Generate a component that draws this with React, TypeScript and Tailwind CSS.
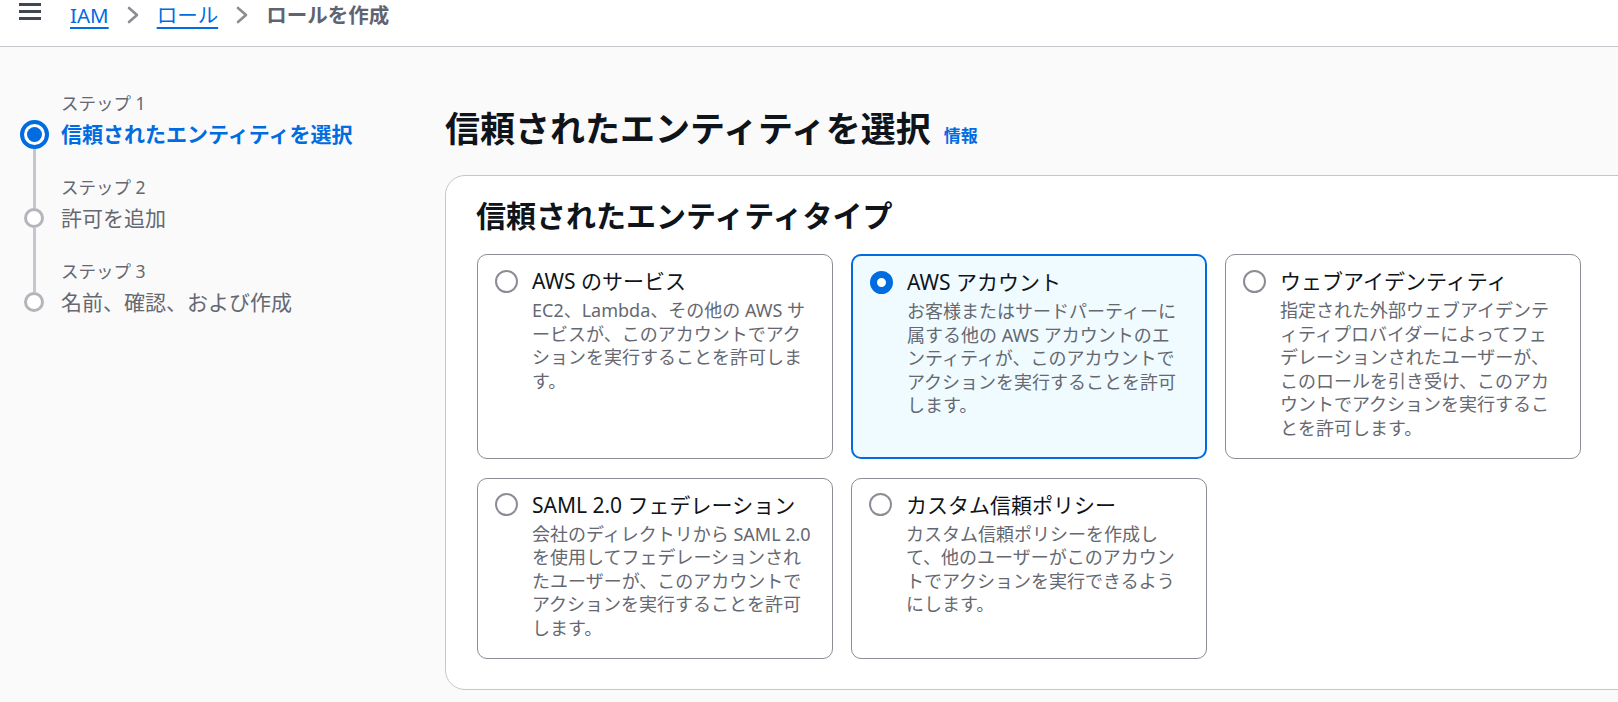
import React from 'react';

type EntityOption = {
  id: string;
  title: string;
  description: string;
};

const options: EntityOption[] = [
  {
    id: 'service',
    title: 'AWS のサービス',
    description: 'EC2、Lambda、その他の AWS サービスが、このアカウントでアクションを実行することを許可します。',
  },
  {
    id: 'account',
    title: 'AWS アカウント',
    description: 'お客様またはサードパーティーに属する他の AWS アカウントのエンティティが、このアカウントでアクションを実行することを許可します。',
  },
  {
    id: 'web',
    title: 'ウェブアイデンティティ',
    description: '指定された外部ウェブアイデンティティプロバイダーによってフェデレーションされたユーザーが、このロールを引き受け、このアカウントでアクションを実行することを許可します。',
  },
  {
    id: 'saml',
    title: 'SAML 2.0 フェデレーション',
    description: '会社のディレクトリから SAML 2.0 を使用してフェデレーションされたユーザーが、このアカウントでアクションを実行することを許可します。',
  },
  {
    id: 'custom',
    title: 'カスタム信頼ポリシー',
    description: 'カスタム信頼ポリシーを作成して、他のユーザーがこのアカウントでアクションを実行できるようにします。',
  },
];

const steps = [
  { label: 'ステップ 1', title: '信頼されたエンティティを選択' },
  { label: 'ステップ 2', title: '許可を追加' },
  { label: 'ステップ 3', title: '名前、確認、および作成' },
];

function Chevron() {
  return (
    <svg width="12" height="18" viewBox="0 0 12 18" fill="none" className="shrink-0">
      <polyline points="2,2 10,9 2,16" stroke="#8c8c94" strokeWidth="2.6" strokeLinecap="round" strokeLinejoin="round" />
    </svg>
  );
}

export default function App() {
  const selectedId = 'account';

  return (
    <div
      lang="ja"
      className="w-full h-[702px] overflow-hidden bg-[#fafafa] text-[#0f141a]"
      style={{ fontFamily: '"Noto Sans", "Noto Sans CJK JP", sans-serif' }}
    >
      {/* Top bar */}
      <div className="h-[47px] bg-white border-b border-[#c6c6cd] flex items-start pl-[19px]">
        <svg width="22" height="20" viewBox="0 0 22 20" className="mt-[2px] shrink-0">
          <rect x="0" y="1" width="22" height="3" fill="#414750" />
          <rect x="0" y="8" width="22" height="3" fill="#414750" />
          <rect x="0" y="15" width="22" height="3" fill="#414750" />
        </svg>
        <nav className="ml-[29px] h-[30px] flex items-center gap-[18px] text-[20.5px] leading-[30px]">
          <span className="text-[#006ce0] underline decoration-2 underline-offset-[4px]">IAM</span>
          <Chevron />
          <span className="text-[#006ce0] underline decoration-2 underline-offset-[4px]">ロール</span>
          <Chevron />
          <span className="text-[#5f6470] font-bold">ロールを作成</span>
        </nav>
      </div>

      <div className="flex">
        {/* Wizard steps */}
        <aside className="w-[445px] shrink-0 pt-[46px] pl-[19px]">
          {steps.map((step, i) => {
            const active = i === 0;
            const last = i === steps.length - 1;
            const size = active ? 29 : 20;
            return (
              <div key={step.label} className="flex">
                <div className="w-[30px] flex flex-col items-center shrink-0">
                  <div
                    className={`w-[3px] ${i === 0 ? 'bg-transparent' : 'bg-[#c6c6cd]'}`}
                    style={{ height: 27 + (28 - size) / 2 }}
                  />
                  {active ? (
                    <div className="w-[29px] h-[29px] rounded-full border-[4px] border-[#006ce0] bg-white flex items-center justify-center shrink-0">
                      <div className="w-[15px] h-[15px] rounded-full bg-[#006ce0]" />
                    </div>
                  ) : (
                    <div className="w-[20px] h-[20px] rounded-full border-[3px] border-[#b4b4bb] bg-white shrink-0" />
                  )}
                  <div className={`w-[3px] flex-1 ${last ? 'bg-transparent' : 'bg-[#c6c6cd]'}`} />
                </div>
                <div className={`ml-[12px] ${last ? '' : 'pb-[29px]'}`}>
                  <div className="h-[20px] text-[17.5px] leading-[20px] text-[#656871] whitespace-nowrap">{step.label}</div>
                  <div
                    className={`mt-[7px] h-[28px] text-[21px] leading-[28px] whitespace-nowrap ${
                      active ? 'text-[#006ce0] font-bold' : 'text-[#656871]'
                    }`}
                  >
                    {step.title}
                  </div>
                </div>
              </div>
            );
          })}
        </aside>

        {/* Main content */}
        <main className="pt-[60px] shrink-0">
          <div className="flex items-baseline gap-[13px]">
            <h1 className="text-[35px] leading-[44px] font-bold whitespace-nowrap">信頼されたエンティティを選択</h1>
            <span className="text-[17px] font-bold text-[#006ce0]">情報</span>
          </div>

          <section className="mt-[24px] w-[1300px] bg-white border border-[#c6c6cd] rounded-[20px] pt-[22px] pb-[30px]">
            <h2 className="pl-[30px] text-[30px] leading-[36px] font-bold whitespace-nowrap">信頼されたエンティティタイプ</h2>

            <div className="mt-[20px] ml-[31px] grid grid-cols-[repeat(3,356px)] gap-x-[18px] gap-y-[19px]">
              {options.map((opt) => {
                const selected = opt.id === selectedId;
                return (
                  <div
                    key={opt.id}
                    className={`flex rounded-[10px] pt-[12px] pb-[17px] pl-[17px] pr-[20px] ${
                      selected ? 'border-2 border-[#006ce0] bg-[#f0fbff]' : 'border border-[#8c8c94] bg-white'
                    }`}
                  >
                    <div className="h-[28px] flex items-center shrink-0">
                      {selected ? (
                        <div className="w-[23px] h-[23px] rounded-full border-[7px] border-[#006ce0] bg-white" />
                      ) : (
                        <div className="w-[23px] h-[23px] rounded-full border-2 border-[#8c8c94] bg-white" />
                      )}
                    </div>
                    <div className="ml-[14px] flex-1 min-w-0">
                      <div className="text-[21px] leading-[28px] text-[#0f141a]">{opt.title}</div>
                      <p className="mt-[4px] text-[18px] leading-[23.6px] text-[#656871] [line-break:loose]">
                        {opt.description}
                      </p>
                    </div>
                  </div>
                );
              })}
            </div>
          </section>
        </main>
      </div>
    </div>
  );
}
